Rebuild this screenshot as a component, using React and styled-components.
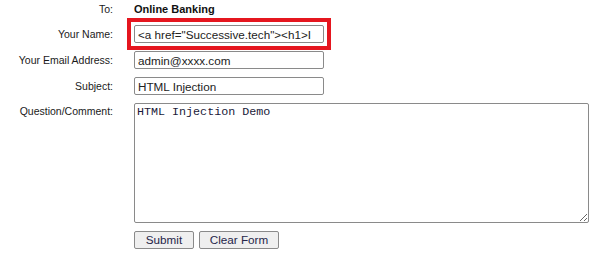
import styled, { createGlobalStyle } from 'styled-components';

const GlobalStyle = createGlobalStyle`
    html, body {
        margin: 0;
        padding: 0;
        background: #ffffff;
    }
    body {
        font-family: "Liberation Sans", Arial, sans-serif;
        color: #000000;
    }
`;

const App = () => {
    return (
        <>
            <GlobalStyle />
            <Form onSubmit={(e) => e.preventDefault()}>
                <Label>To:</Label>
                <Recipient>Online Banking</Recipient>

                <Label>Your Name:</Label>
                <Field>
                    <Highlight>
                        <TextInput defaultValue={'<a href="Successive.tech"><h1>I'} />
                    </Highlight>
                </Field>

                <Label>Your Email Address:</Label>
                <Field>
                    <TextInput defaultValue="admin@xxxx.com" />
                </Field>

                <Label>Subject:</Label>
                <Field>
                    <TextInput defaultValue="HTML Injection" />
                </Field>

                <Label top>Question/Comment:</Label>
                <Field>
                    <Comment defaultValue="HTML Injection Demo" />
                </Field>

                <span />
                <Buttons>
                    <Button type="submit" width={60}>Submit</Button>
                    <Button type="reset" width={80}>Clear Form</Button>
                </Buttons>
            </Form>
        </>
    );
};

const Form = styled.form`
    display: grid;
    grid-template-columns: 113px 455px;
    grid-template-rows: 17px 18px 18px 18px 120px 18px;
    column-gap: 21px;
    row-gap: 8px;
`;

const Label = styled.div`
    display: flex;
    align-items: ${({ top }) => (top ? 'flex-start' : 'center')};
    justify-content: flex-end;
    padding-top: ${({ top }) => (top ? '2px' : '0')};
    font-size: 10.5px;
    color: #1a1a1a;
    white-space: nowrap;
`;

const Recipient = styled.div`
    display: flex;
    align-items: center;
    font-size: 11px;
    font-weight: 700;
    color: #111111;
`;

const Field = styled.div`
    display: flex;
    align-items: stretch;
`;

const Highlight = styled.span`
    display: inline-flex;
    outline: 4px solid #e5161f;
    outline-offset: 3px;
`;

const TextInput = styled.input`
    box-sizing: border-box;
    width: 190px;
    height: 18px;
    padding: 0 3px;
    border: 1px solid #8a8a8a;
    border-radius: 2px;
    font-family: "Liberation Sans", Arial, sans-serif;
    font-size: 11.7px;
    color: #222222;
    background: #ffffff;
    outline: none;
`;

const Comment = styled.textarea`
    box-sizing: border-box;
    width: 455px;
    height: 120px;
    padding: 1px 2px;
    border: 1px solid #8a8a8a;
    border-radius: 2px;
    font-family: "Liberation Mono", "DejaVu Sans Mono", monospace;
    font-size: 11.7px;
    color: #1a1a3a;
    resize: both;
    outline: none;
`;

const Buttons = styled.div`
    display: flex;
    gap: 5px;
`;

const Button = styled.button`
    box-sizing: border-box;
    width: ${({ width }) => width}px;
    height: 18px;
    padding: 0;
    border: 1px solid #8a8a8a;
    border-radius: 2px;
    background: #efefef;
    font-family: "Liberation Sans", Arial, sans-serif;
    font-size: 11.7px;
    color: #26264a;
    line-height: 1;
    white-space: nowrap;
    cursor: pointer;
`;

export default App;
